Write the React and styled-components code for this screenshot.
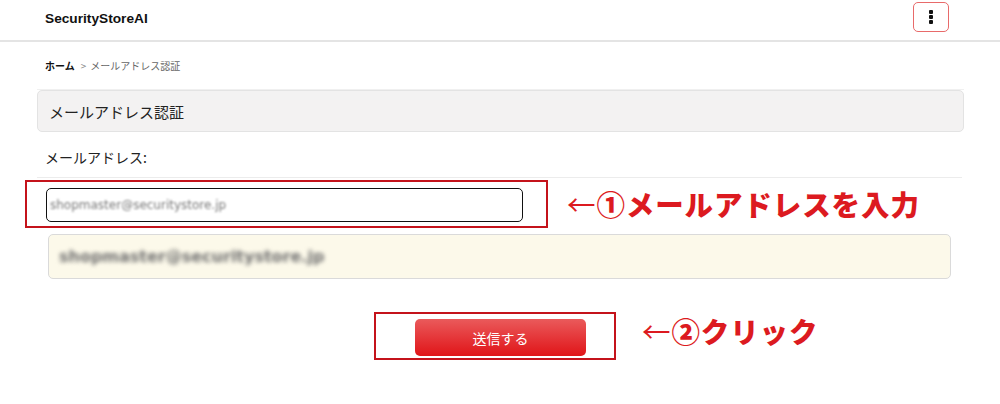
import React from "react";
import styled, { createGlobalStyle } from "styled-components";

const Global = createGlobalStyle`
  html, body { margin: 0; padding: 0; background: #fff; }
  body {
    font-family: "Noto Sans CJK JP", "Liberation Sans", sans-serif;
    color: #222;
  }
  * { box-sizing: border-box; }
`;

const Page = styled.div`
  width: 1000px;
  height: 404px;
  overflow: hidden;
  background: #fff;
`;

const Header = styled.header`
  height: 42px;
  border-bottom: 2px solid #e4e4e4;
  display: flex;
  align-items: center;
  justify-content: space-between;
  padding: 0 51px 0 45px;
`;

const Brand = styled.div`
  font-family: "Liberation Sans", Arial, sans-serif;
  font-weight: 700;
  font-size: 13.7px;
  color: #111;
  margin-top: -3px;
`;

const MenuButton = styled.button`
  width: 36px;
  height: 30px;
  margin-top: -6px;
  border: 1.5px solid #e86a6a;
  border-radius: 5px;
  background: #fff;
  display: flex;
  flex-direction: column;
  align-items: center;
  justify-content: center;
  gap: 1.5px;
  padding: 0;
`;

const Dot = styled.span`
  width: 3.5px;
  height: 3.5px;
  background: #111;
  border-radius: 1px;
`;

const Main = styled.main`
  padding: 0 36px 0 37px;
`;

const Breadcrumb = styled.nav`
  height: 48px;
  display: flex;
  align-items: center;
  padding-left: 8px;
  font-size: 10px;
  color: #666;
  border-bottom: 1px solid #f0f0f0;
`;

const Crumb = styled.span`
  font-weight: ${(p) => (p.$strong ? 700 : 400)};
  color: ${(p) => (p.$strong ? "#111" : "#666")};
`;

const Sep = styled.span`
  margin: 0 4px 0 6px;
  color: #888;
`;

const TitleBox = styled.h1`
  margin: 0;
  height: 42px;
  display: flex;
  align-items: center;
  padding-left: 11px;
  background: #f3f2f2;
  border: 1.5px solid #e3e3e3;
  border-radius: 5px;
  font-size: 15px;
  font-weight: 400;
  color: #222;
`;

const FieldLabel = styled.div`
  height: 45.5px;
  display: flex;
  align-items: center;
  padding: 6px 0 0 8px;
  font-size: 14px;
  color: #222;
  border-bottom: 1.5px solid #ececec;
  margin-right: 2px;
`;

const Row = styled.div`
  display: flex;
  align-items: center;
  margin-left: ${(p) => p.$ml || "0"};
  margin-top: ${(p) => p.$mt || "0"};
`;

const Annot = styled.div`
  border: 2px solid #c4131b;
  width: ${(p) => p.$w};
  height: 48px;
  padding: ${(p) => p.$pad};
  flex-shrink: 0;
`;

const AnnotText = styled.div`
  margin-left: ${(p) => p.$ml};
  margin-top: ${(p) => p.$mt || "0"};
  font-size: 28.5px;
  font-weight: 900;
  color: #dc1a20;
  letter-spacing: 0.9px;
  white-space: nowrap;
  line-height: 1;
`;

const Arrow = styled.span`
  font-weight: 400;
`;

const InputBox = styled.div`
  height: 34px;
  border: 1.5px solid #111;
  border-radius: 5px;
  background: #fff;
  display: flex;
  align-items: center;
  padding-left: 3px;
`;

const Blurred = styled.span`
  font-family: "DejaVu Sans", Verdana, sans-serif;
  font-size: ${(p) => p.$size};
  font-weight: ${(p) => p.$weight || 400};
  color: ${(p) => p.$color};
  filter: blur(${(p) => p.$blur});
`;

const Suggestion = styled.div`
  margin: 6px 13px 0 11px;
  height: 45px;
  background: #fcf9ea;
  border: 1.5px solid #dadada;
  border-radius: 5px;
  display: flex;
  align-items: center;
  padding-left: 10px;
`;

const SubmitButton = styled.button`
  width: 171px;
  height: 37px;
  border: none;
  border-radius: 5px;
  background: linear-gradient(to bottom, #ea5a5b 0%, #e43033 60%, #e01518 100%);
  color: #fff;
  font-family: "Noto Sans CJK JP", sans-serif;
  font-size: 14px;
  padding: 0;
`;

export default function App() {
  return (
    <Page>
      <Global />
      <Header>
        <Brand>SecurityStoreAI</Brand>
        <MenuButton aria-label="menu">
          <Dot />
          <Dot />
          <Dot />
        </MenuButton>
      </Header>
      <Main>
        <Breadcrumb>
          <Crumb $strong>ホーム</Crumb>
          <Sep>&gt;</Sep>
          <Crumb>メールアドレス認証</Crumb>
        </Breadcrumb>
        <TitleBox>メールアドレス認証</TitleBox>
        <FieldLabel>メールアドレス:</FieldLabel>
        <Row $ml="-12px" $mt="2.5px">
          <Annot $w="523px" $pad="6px 23px 4px 19px">
            <InputBox>
              <Blurred $size="12px" $color="#7a7a7a" $blur="0.9px">
                shopmaster@securitystore.jp
              </Blurred>
            </InputBox>
          </Annot>
          <AnnotText $ml="19px">
            <Arrow>←</Arrow>①メールアドレスを入力
          </AnnotText>
        </Row>
        <Suggestion>
          <Blurred $size="16px" $weight={700} $color="#6f6f6f" $blur="2px">
            shopmaster@securitystore.jp
          </Blurred>
        </Suggestion>
        <Row $ml="337px" $mt="33px">
          <Annot $w="242px" $pad="5px 28px 2px 39px">
            <SubmitButton>送信する</SubmitButton>
          </Annot>
          <AnnotText $ml="26px" $mt="-10px">
            <Arrow>←</Arrow>②クリック
          </AnnotText>
        </Row>
      </Main>
    </Page>
  );
}
